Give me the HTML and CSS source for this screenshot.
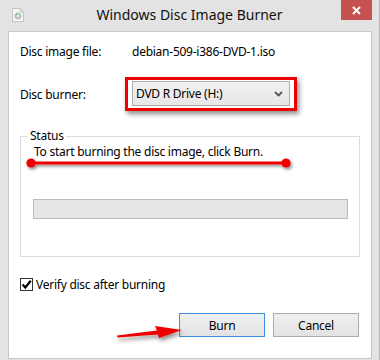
FILE: index.html
```html
<!DOCTYPE html>
<html>
<head>
<meta charset="utf-8">
<link rel="stylesheet" href="styles.css">
</head>
<body>
<div class="window">
  <div class="titlebar">
    <div class="tb-left">
      <svg class="app-icon" width="12" height="14" viewBox="0 0 12 14">
        <path d="M0.5 0.5 H8 L11.5 4 V13.5 H0.5 Z" fill="#f7f7f7" stroke="#c4c4c4"/>
        <path d="M8 0.5 V4 H11.5" fill="none" stroke="#c4c4c4"/>
        <circle cx="6" cy="8" r="3.6" fill="#b9c7b9"/>
        <circle cx="6" cy="8" r="1.2" fill="#f0f0f0"/>
        <path d="M3 7 A3.6 3.6 0 0 1 5 4.6 L5.6 6.8 Z" fill="#8fc08f"/>
      </svg>
    </div>
    <div class="title">Windows Disc Image Burner</div>
    <div class="tb-right">
      <div class="close">
        <svg width="9" height="9" viewBox="0 0 9 9"><path d="M1 1 L8 8 M8 1 L1 8" stroke="#fff" stroke-width="2"/></svg>
      </div>
    </div>
  </div>
  <div class="panel">
    <div class="row row-file">
      <span class="label">Disc image file:</span>
      <span class="value">debian-509-i386-DVD-1.iso</span>
    </div>
    <div class="row row-burner">
      <span class="label">Disc burner:</span>
      <div class="highlight">
        <div class="combo">
          <span>DVD R Drive (H:)</span>
          <svg class="chev" width="9" height="6" viewBox="0 0 9 6"><path d="M1 1 L4.5 4.5 L8 1" fill="none" stroke="#555" stroke-width="1.8"/></svg>
        </div>
      </div>
    </div>
    <fieldset class="status">
      <legend>Status</legend>
      <div class="status-text">To start burning the disc image, click Burn.</div>
      <svg class="underline" width="270" height="16" viewBox="0 0 270 16">
        <defs>
          <filter id="sh1" x="-10%" y="-100%" width="120%" height="300%">
            <feDropShadow dx="1.5" dy="2" stdDeviation="1.5" flood-color="#000" flood-opacity="0.45"/>
          </filter>
        </defs>
        <g filter="url(#sh1)">
          <line x1="6" y1="6" x2="261" y2="6" stroke="#ee0000" stroke-width="3"/>
          <circle cx="6" cy="6" r="4.6" fill="#ee0000"/>
          <circle cx="261" cy="6" r="4.6" fill="#ee0000"/>
        </g>
      </svg>
      <div class="progress"></div>
    </fieldset>
    <label class="check-row">
      <span class="checkbox">
        <svg width="11" height="11" viewBox="0 0 11 11"><path d="M1.5 5.5 L4.3 8.5 L9.8 1.8" fill="none" stroke="#000" stroke-width="2.2"/></svg>
      </span>
      <span>Verify disc after burning</span>
    </label>
    <div class="buttons">
      <button class="btn btn-default">Burn</button>
      <button class="btn">Cancel</button>
      <svg class="arrow" width="80" height="26" viewBox="0 0 80 26">
        <defs>
          <filter id="sh2" x="-20%" y="-50%" width="140%" height="220%">
            <feDropShadow dx="1.5" dy="3" stdDeviation="2" flood-color="#000" flood-opacity="0.45"/>
          </filter>
        </defs>
        <path filter="url(#sh2)" d="M1 16.5 L41 11.5 L39 7 L66 11 L43 19 L42 15.5 L1.5 18.5 Z" fill="#ee0000"/>
      </svg>
    </div>
  </div>
</div>
</body>
</html>
```
FILE: styles.css
```css
* { box-sizing: border-box; }
html, body { margin: 0; padding: 0; }
body {
  width: 380px;
  height: 360px;
  overflow: hidden;
  font-family: "Noto Sans", "Open Sans", sans-serif;
  font-size: 12px;
  letter-spacing: -0.25px;
  color: #000;
}
.window {
  width: 380px;
  height: 360px;
  background: #e3e3e3;
  border-right: 1px solid #b4b4b4;
  display: flex;
  flex-direction: column;
}
.titlebar {
  height: 31px;
  display: grid;
  grid-template-columns: 1fr auto 1fr;
  align-items: start;
}
.tb-left { padding: 8px 0 0 12px; }
.app-icon { display: block; }
.title {
  font-size: 14px;
  letter-spacing: 0;
  line-height: 20px;
  padding-top: 5px;
  color: #111;
  white-space: nowrap;
}
.tb-right { display: flex; justify-content: flex-end; padding-right: 7px; }
.close {
  width: 31px;
  height: 20px;
  background: #c75050;
  display: flex;
  align-items: center;
  justify-content: center;
}
.close svg { display: block; }
.panel {
  margin: 0 7px 0 8px;
  height: 328px;
  background: #fff;
  border: 1px solid #c8c8c8;
  padding: 12px 0 0 11px;
  display: flex;
  flex-direction: column;
  position: relative;
}
.row { display: flex; align-items: center; }
.row-file { height: 16px; line-height: 16px; }
.label { width: 112px; flex: none; }
.row-burner { margin-top: 17px; height: 34px; }
.row-burner .label { width: 105px; }
.highlight {
  width: 172px;
  height: 34px;
  border: 3px solid #ee0000;
  padding: 1px 4px 2px 4px;
  box-shadow: 2px 3px 5px rgba(0,0,0,0.45);
}
.combo {
  width: 158px;
  height: 25px;
  border: 1px solid #acacac;
  background: linear-gradient(#f2f2f2, #e6e6e6);
  display: flex;
  align-items: center;
  justify-content: space-between;
  padding: 0 6px 0 3px;
}
.chev { display: block; }
.status {
  margin: 18px 0 0 0;
  width: 340px;
  height: 128px;
  border: 1px solid #dcdcdc;
  padding: 0;
  position: relative;
  min-width: 0;
}
.status legend {
  margin-left: 7px;
  padding: 0 2px;
  line-height: 14px;
}
.status-text {
  margin: 1px 0 0 13px;
  line-height: 16px;
}
.underline {
  position: absolute;
  left: 4px;
  top: 14px;
}
.progress {
  margin: 39px 0 0 12px;
  width: 315px;
  height: 20px;
  background: #e6e6e6;
  border: 1px solid #bcbcbc;
}
.check-row {
  margin-top: 20px;
  display: flex;
  align-items: center;
  height: 14px;
  gap: 3px;
}
.checkbox {
  width: 13px;
  height: 13px;
  border: 1px solid #333;
  background: #fff;
  display: flex;
  align-items: center;
  justify-content: center;
}
.checkbox svg { display: block; }
.buttons {
  margin-top: 22px;
  display: flex;
  gap: 8px;
  padding-left: 159px;
  position: relative;
}
.btn {
  width: 86px;
  height: 24px;
  font-family: inherit;
  font-size: 12px;
  letter-spacing: -0.25px;
  color: #000;
  background: linear-gradient(#efefef, #e3e3e3);
  border: 1px solid #acacac;
  padding: 0;
  margin: 0;
}
.btn-default { border-color: #3c8fe0; }
.arrow {
  position: absolute;
  left: 96px;
  top: 6px;
}
```
